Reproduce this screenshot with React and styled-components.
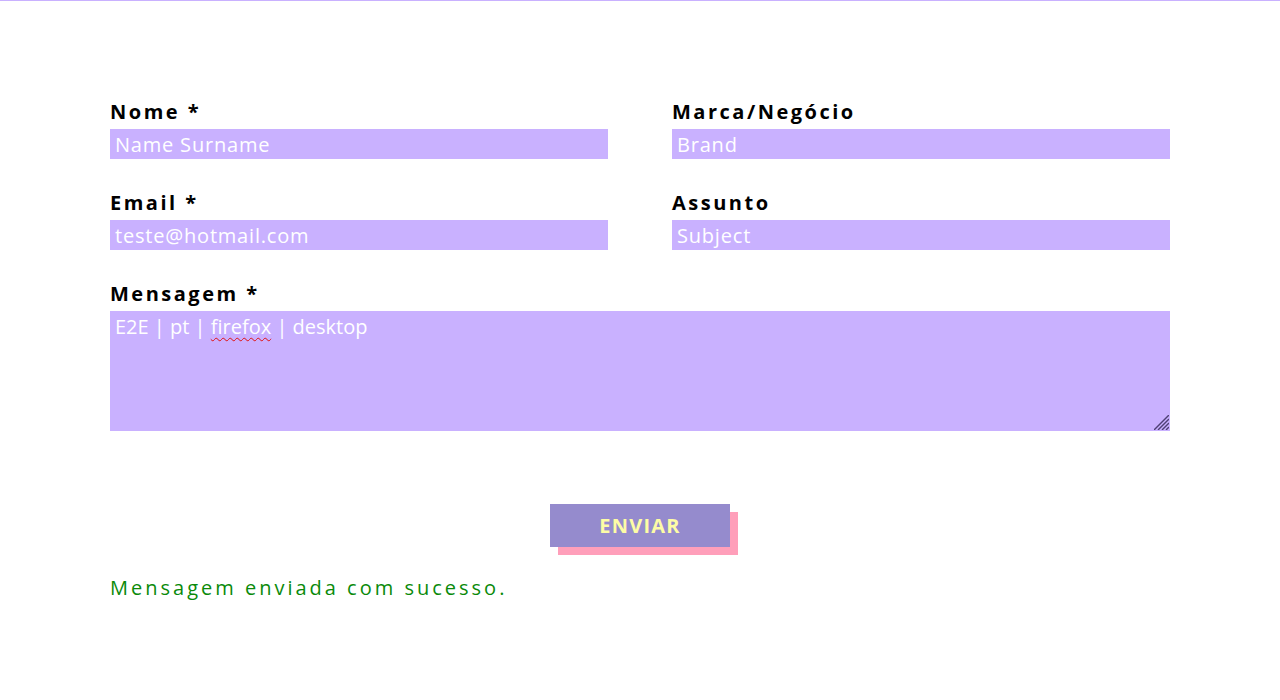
import React from "react";
import styled, { createGlobalStyle } from "styled-components";

const GlobalStyle = createGlobalStyle`
  html, body {
    margin: 0;
    padding: 0;
    background: #fff;
  }
  body {
    border-top: 1px solid #c9b1ff;
    font-family: "Open Sans", "DejaVu Sans", sans-serif;
  }
`;

const Form = styled.form`
  width: 1060px;
  margin: 0 auto;
  padding-top: 98px;
`;

const Grid = styled.div`
  display: grid;
  grid-template-columns: 1fr 1fr;
  column-gap: 64px;
  row-gap: 31px;
`;

const Field = styled.div`
  display: flex;
  flex-direction: column;
  grid-column: ${(p) => (p.$full ? "1 / -1" : "auto")};
`;

const Label = styled.label`
  font-family: "Open Sans", sans-serif;
  font-weight: 700;
  font-size: 20px;
  line-height: 26px;
  letter-spacing: 2.5px;
  color: #000;
  margin-bottom: 4px;
`;

const Input = styled.input`
  box-sizing: border-box;
  height: 30px;
  border: none;
  outline: none;
  background: #c9b1ff;
  color: #fff;
  font-family: "Open Sans", sans-serif;
  font-size: 20px;
  letter-spacing: 0.8px;
  padding: 0 5px;
  &::placeholder {
    color: #fff;
    opacity: 1;
  }
`;

const AreaWrap = styled.div`
  position: relative;
  height: 120px;
`;

const TextArea = styled.textarea`
  display: block;
  box-sizing: border-box;
  width: 100%;
  height: 100%;
  border: none;
  outline: none;
  background: #c9b1ff;
  color: #fff;
  font-family: "Open Sans", sans-serif;
  font-size: 20px;
  letter-spacing: 0;
  line-height: 32px;
  padding: 0 5px;
  resize: none;
`;

const SpellLayer = styled.div`
  position: absolute;
  inset: 0;
  padding: 0 5px;
  font-family: "Open Sans", sans-serif;
  font-size: 20px;
  letter-spacing: 0;
  line-height: 32px;
  color: transparent;
  pointer-events: none;
  white-space: pre;
`;

const Misspelled = styled.span`
  text-decoration: underline wavy #e01010;
  text-decoration-thickness: 1px;
  text-underline-offset: 3px;
`;

const Grip = styled.svg`
  position: absolute;
  right: 1px;
  bottom: 1px;
  width: 15px;
  height: 15px;
  pointer-events: none;
`;

const ButtonRow = styled.div`
  display: flex;
  justify-content: center;
  margin-top: 73px;
`;

const SubmitButton = styled.button`
  width: 180px;
  height: 43px;
  border: none;
  background: #958bcd;
  box-shadow: 8px 8px 0 #ff9fba;
  color: #fdfca6;
  font-family: "Open Sans", sans-serif;
  font-weight: 700;
  font-size: 20px;
  letter-spacing: 1.2px;
  cursor: pointer;
`;

const Success = styled.p`
  margin: 27px 0 0;
  color: #0a8a0a;
  font-family: "Open Sans", sans-serif;
  font-size: 20px;
  letter-spacing: 3px;
`;

export default function App() {
  return (
    <>
      <GlobalStyle />
      <Form onSubmit={(e) => e.preventDefault()}>
        <Grid>
          <Field>
            <Label>Nome *</Label>
            <Input placeholder="Name Surname" />
          </Field>
          <Field>
            <Label>Marca/Negócio</Label>
            <Input placeholder="Brand" />
          </Field>
          <Field>
            <Label>Email *</Label>
            <Input placeholder="teste@hotmail.com" />
          </Field>
          <Field>
            <Label>Assunto</Label>
            <Input placeholder="Subject" />
          </Field>
          <Field $full>
            <Label>Mensagem *</Label>
            <AreaWrap>
              <TextArea spellCheck={false} defaultValue="E2E | pt | firefox | desktop" />
              <SpellLayer aria-hidden="true">
                E2E | pt | <Misspelled>firefox</Misspelled> | desktop
              </SpellLayer>
              <Grip viewBox="0 0 15 15" aria-hidden="true">
                <g stroke="#4e4075" strokeWidth="1.4">
                  <line x1="0" y1="15" x2="15" y2="0" />
                  <line x1="4" y1="15" x2="15" y2="4" />
                  <line x1="8" y1="15" x2="15" y2="8" />
                  <line x1="12" y1="15" x2="15" y2="12" />
                </g>
              </Grip>
            </AreaWrap>
          </Field>
        </Grid>
        <ButtonRow>
          <SubmitButton type="submit">ENVIAR</SubmitButton>
        </ButtonRow>
        <Success>Mensagem enviada com sucesso.</Success>
      </Form>
    </>
  );
}
